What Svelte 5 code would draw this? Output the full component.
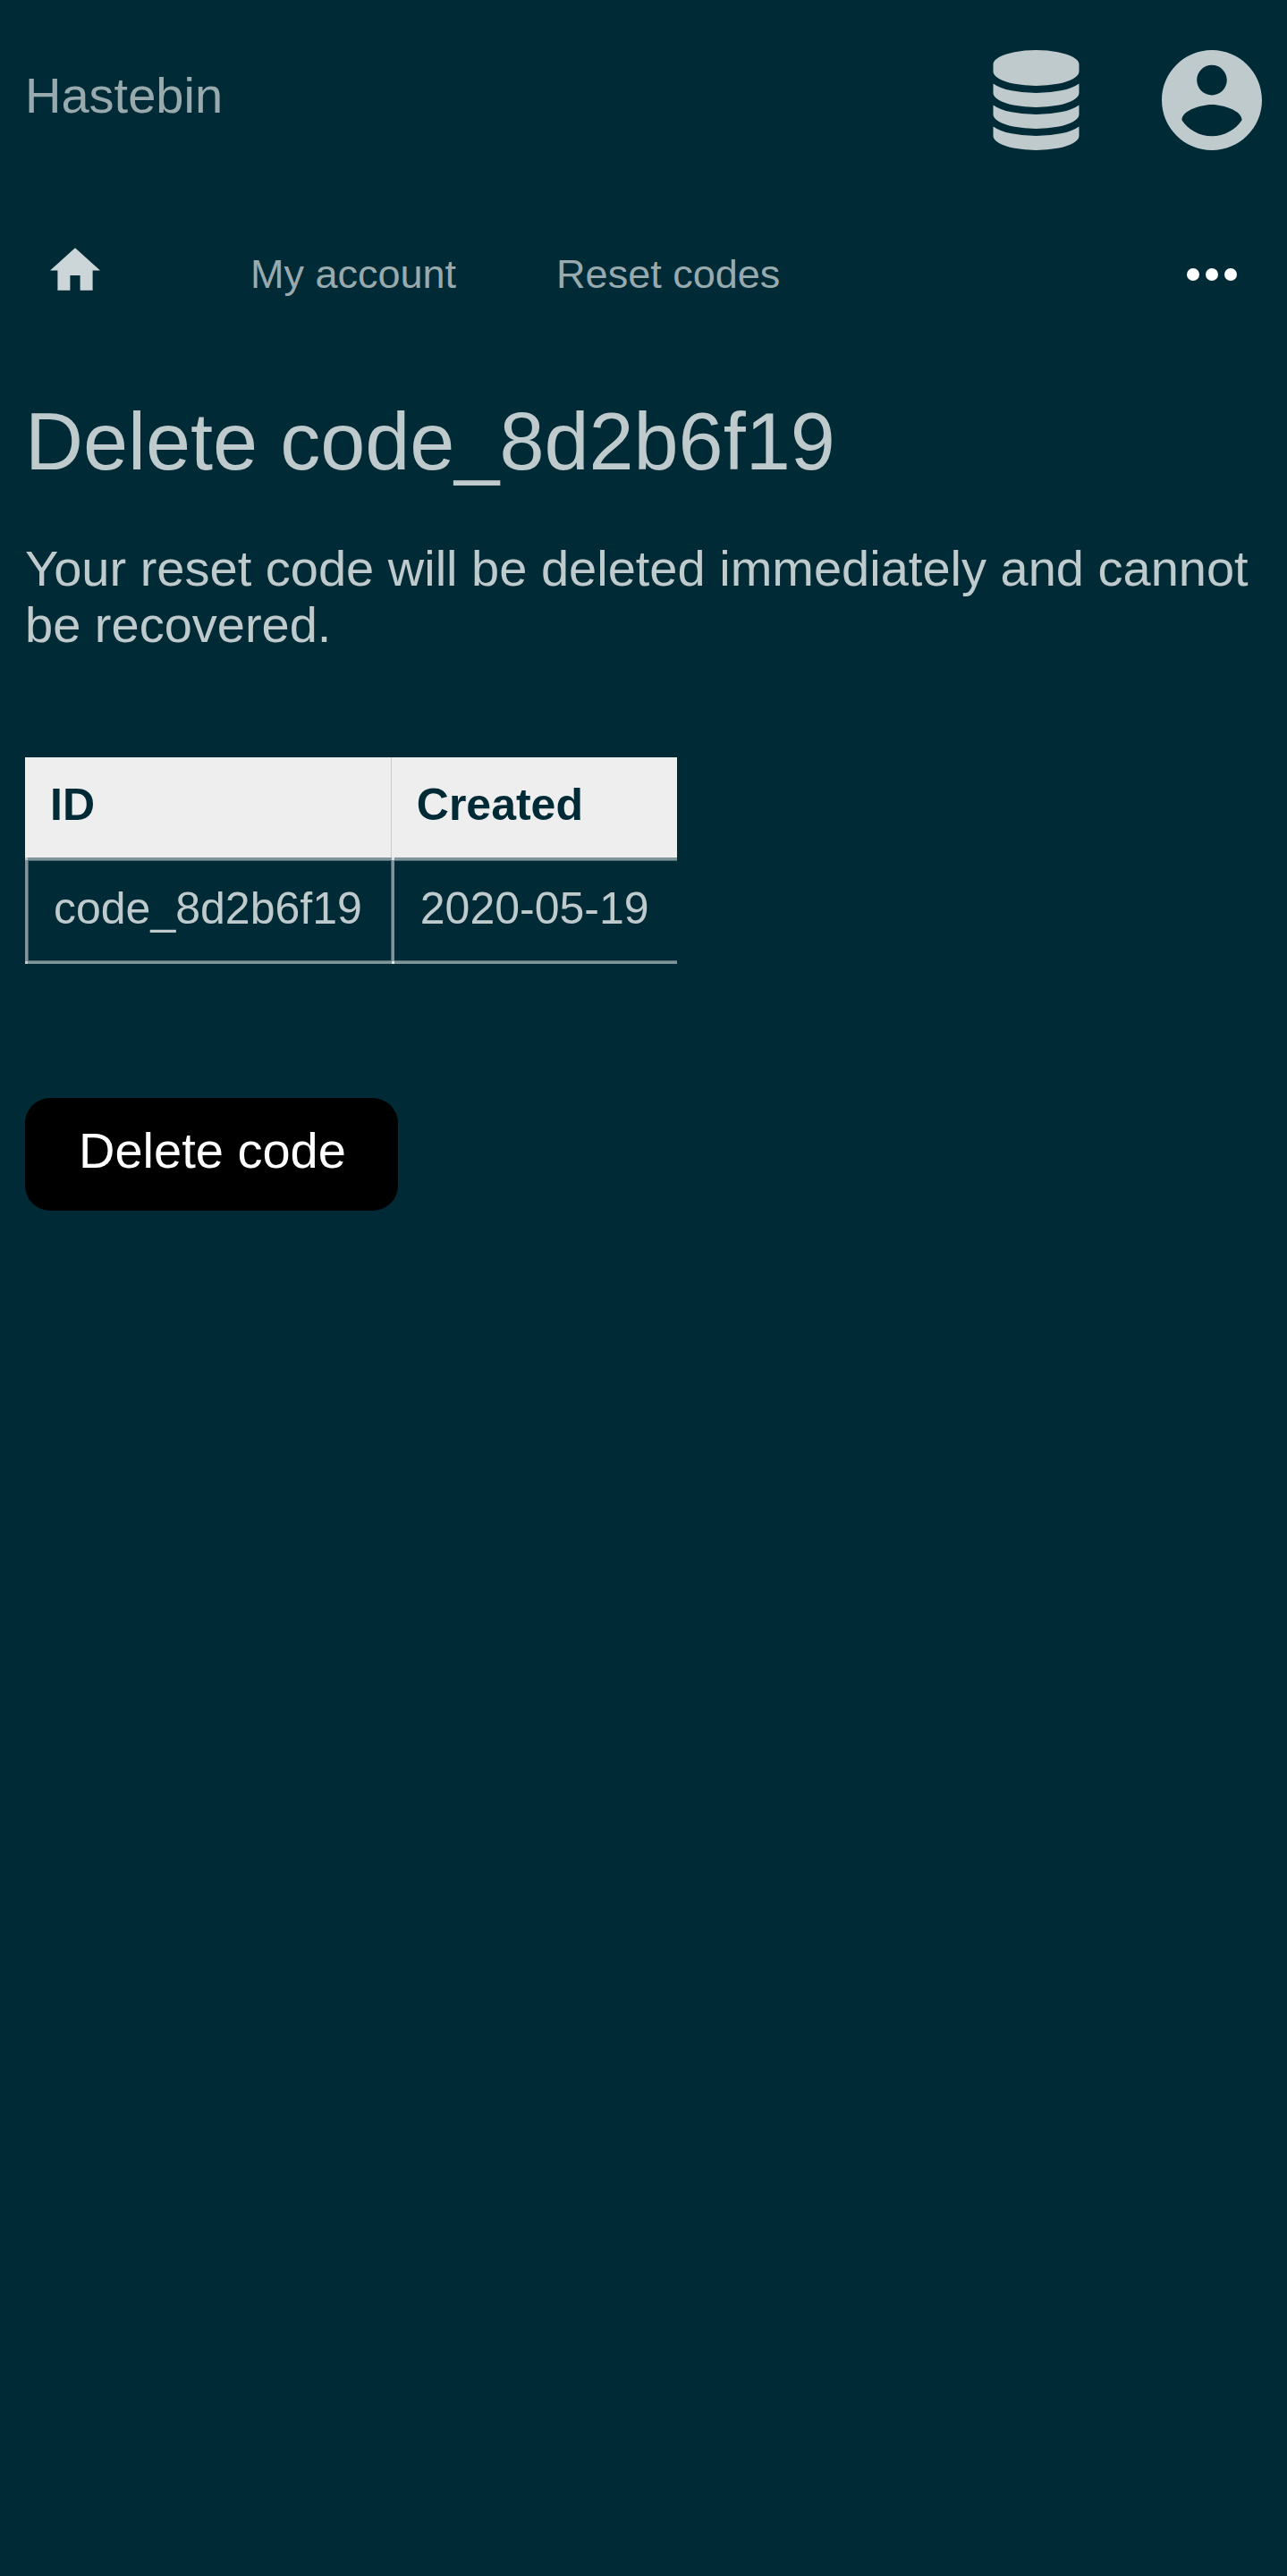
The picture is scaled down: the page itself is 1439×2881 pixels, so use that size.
<script>
  const columns = ['ID', 'Created'];
  const rows = [{ id: 'code_8d2b6f19', created: '2020-05-19' }];
</script>

<div class="page">
  <header>
    <a class="brand" href="/">Hastebin</a>
    <div class="tools">
      <a href="/data" aria-label="Data">
        <svg class="database" viewBox="0 0 1536 1792" aria-hidden="true">
          <path d="M768 768q237 0 443-43t325-127v170q0 69-103 128t-280 93.500-385 34.500-385-34.500-280-93.500-103-128v-170q119 84 325 127t443 43zm0 768q237 0 443-43t325-127v170q0 69-103 128t-280 93.500-385 34.500-385-34.500-280-93.500-103-128v-170q119 84 325 127t443 43zm0-384q237 0 443-43t325-127v170q0 69-103 128t-280 93.500-385 34.500-385-34.500-280-93.500-103-128v-170q119 84 325 127t443 43zm0-1152q208 0 385 34.500t280 93.500 103 128v128q0 69-103 128t-280 93.500-385 34.500-385-34.500-280-93.500-103-128v-128q0-69 103-128t280-93.500 385-34.500z" />
        </svg>
      </a>
      <a href="/account" aria-label="Account">
        <svg class="user" viewBox="2 2 20 20" aria-hidden="true">
          <path d="M12 2C6.480 2 2 6.480 2 12s4.480 10 10 10 10-4.480 10-10S17.520 2 12 2zm0 3c1.660 0 3 1.340 3 3s-1.340 3-3 3-3-1.340-3-3 1.340-3 3-3zm0 14.200c-2.500 0-4.710-1.280-6-3.220.030-1.990 4-3.080 6-3.080 1.990 0 5.970 1.090 6 3.080-1.290 1.940-3.500 3.220-6 3.220z" />
        </svg>
      </a>
    </div>
  </header>

  <nav aria-label="Breadcrumb">
    <a class="home" href="/" aria-label="Home">
      <svg viewBox="2 3 20 17" aria-hidden="true"><path d="M10 20v-6h4v6h5v-8h3L12 3 2 12h3v8z" /></svg>
    </a>
    <a href="/account">My account</a>
    <a href="/account/codes">Reset codes</a>
    <button class="more" type="button" aria-label="More">
      <svg viewBox="0 0 16 4" aria-hidden="true">
        <circle cx="2" cy="2" r="2" /><circle cx="8" cy="2" r="2" /><circle cx="14" cy="2" r="2" />
      </svg>
    </button>
  </nav>

  <main>
    <h1>Delete code_8d2b6f19</h1>
    <p>Your reset code will be deleted immediately and cannot be recovered.</p>
    <table>
      <thead>
        <tr>
          {#each columns as column}<th scope="col">{column}</th>{/each}
        </tr>
      </thead>
      <tbody>
        {#each rows as row}
          <tr><td>{row.id}</td><td>{row.created}</td></tr>
        {/each}
      </tbody>
    </table>
    <button class="submit" type="button">Delete code</button>
  </main>
</div>

<style>
  :global(body) {
    margin: 0;
    background: #002b36;
  }
  .page {
    box-sizing: border-box;
    min-height: 100vh;
    padding: 56px 28px;
    background: #002b36;
    color: #bfcacd;
    font: 56px/63px "Liberation Sans", Arial, sans-serif;
  }
  a {
    color: #99aaaf;
    text-decoration: none;
  }
  svg {
    display: block;
    fill: currentColor;
  }
  header {
    display: flex;
    justify-content: space-between;
    align-items: flex-start;
    height: 112px;
  }
  .brand {
    padding-top: 19px;
  }
  .tools {
    display: flex;
    gap: 92px;
  }
  .tools a {
    color: #bfcacd;
  }
  .database {
    width: 97px;
    height: 112px;
  }
  .user {
    width: 112px;
    height: 112px;
  }
  nav {
    display: flex;
    align-items: center;
    gap: 112px;
    margin-top: 83px;
    padding: 0 28px;
    height: 112px;
    font-size: 45px;
    line-height: 52px;
  }
  .home {
    margin-right: 56px;
    padding-bottom: 12px;
    color: #ccd5d7;
  }
  .home svg {
    width: 56px;
    height: 48px;
  }
  .more {
    margin-left: auto;
    padding: 0;
    border: 0;
    background: none;
    color: #fff;
  }
  .more svg {
    width: 56px;
    height: 14px;
  }
  h1 {
    margin: 80px 0 0;
    font-size: 90px;
    line-height: 102px;
    font-weight: 400;
  }
  p {
    margin: 59px 0 0;
  }
  table {
    margin-top: 117px;
    border-spacing: 0;
    font-size: 50px;
    line-height: 56px;
  }
  th {
    padding: 25px 28px 31px;
    background: #eee;
    color: #002b36;
    text-align: left;
  }
  th:not(:last-child) {
    border-right: 1px solid #ccc;
  }
  td {
    --joint: rgba(255, 255, 255, 0.5);
    padding: 26px 33px 31px 29px;
    border: solid rgba(255, 255, 255, 0.5);
    border-width: 3px 0 3px 3px;
    background:
      linear-gradient(var(--joint) 0 0) top left / 3px 3px no-repeat border-box,
      linear-gradient(var(--joint) 0 0) bottom left / 3px 3px no-repeat border-box;
    box-shadow: inset 0 0 0 1px #4d6b72;
  }
  td:last-child {
    --joint: rgba(255, 255, 255, 0.75);
    padding-right: 31px;
    box-shadow: inset 0 1px #4d6b72, inset 0 -1px #4d6b72;
  }
  .submit {
    display: block;
    margin-top: 150px;
    padding: 27px 58px 36px 60px;
    border: 0;
    border-radius: 28px;
    background: #000;
    color: #fff;
    font: inherit;
  }
</style>
